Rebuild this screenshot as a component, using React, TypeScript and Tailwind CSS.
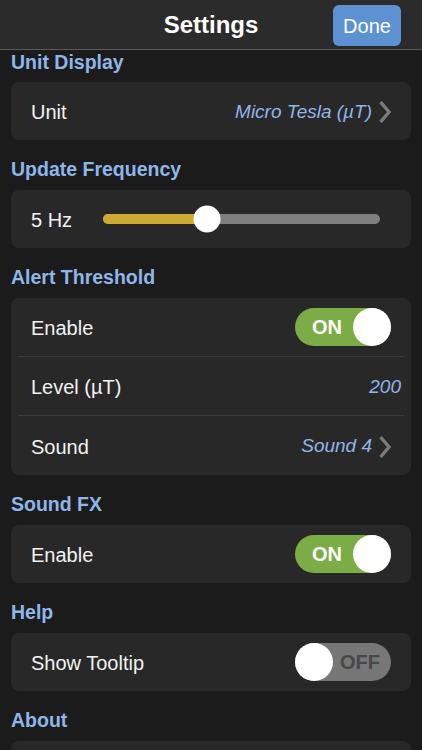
import type { ReactNode } from 'react';

const FONT = { fontFamily: '"Liberation Sans", Arial, sans-serif' };

function SectionHeader({ title, first = false }: { title: string; first?: boolean }) {
  return (
    <div
      className={`flex items-end px-[11px] ${first ? 'h-[32px] pb-[10px]' : 'h-[50px] pb-[11px]'}`}
    >
      <span className="text-[19.5px] leading-[20px] font-bold text-[#8fb6e8]">{title}</span>
    </div>
  );
}

function Card({ children }: { children?: ReactNode }) {
  return <div className="mx-[11px] min-h-[58px] rounded-[8px] bg-[#282828]">{children}</div>;
}

function Divider() {
  return <div className="mx-[7px] h-px bg-[#3d3d3d]" />;
}

function Row({ label, tall = false, children }: { label: string; tall?: boolean; children?: ReactNode }) {
  return (
    <div className={`flex items-center justify-between pl-[20px] ${tall ? 'h-[59px]' : 'h-[58px]'}`}>
      <span className="pt-[2px] text-[20px] text-[#f2f2f2]">{label}</span>
      {children}
    </div>
  );
}

function Chevron() {
  return (
    <svg width="14" height="24" viewBox="0 0 14 24" className="ml-[6px]">
      <path d="M2.5 2 L11 12 L2.5 22" fill="none" stroke="#7a7a7a" strokeWidth="3.4" />
    </svg>
  );
}

function Value({ text, chevron = true }: { text: string; chevron?: boolean }) {
  return (
    <div className={`flex items-center pt-[2px] ${chevron ? 'pr-[19px]' : 'pr-[10px]'}`}>
      <span className="text-[19px] italic text-[#8fb6e8]">{text}</span>
      {chevron && <Chevron />}
    </div>
  );
}

function Toggle({ on }: { on: boolean }) {
  return (
    <div className="mr-[20px]">
      {on ? (
        <div className="flex h-[38px] w-[96px] items-center justify-between rounded-full bg-[#7cac45]">
          <span className="pl-[17px] text-[20px] font-bold text-white">ON</span>
          <div className="h-[38px] w-[38px] rounded-full bg-white" />
        </div>
      ) : (
        <div className="flex h-[38px] w-[96px] items-center justify-between rounded-full bg-[#777777]">
          <div className="h-[38px] w-[38px] rounded-full bg-white" />
          <span className="pr-[11px] text-[20px] font-bold text-[#484848]">OFF</span>
        </div>
      )}
    </div>
  );
}

function Slider({ percent }: { percent: number }) {
  return (
    <div className="relative mr-[31px] ml-[20px] h-[10px] flex-1 rounded-full bg-[#7e7e7e]">
      <div className="h-full rounded-full bg-[#cdab33]" style={{ width: `${percent}%` }} />
      <div
        className="absolute top-1/2 h-[27px] w-[27px] -translate-x-1/2 -translate-y-1/2 rounded-full bg-white"
        style={{ left: `${percent}%` }}
      />
    </div>
  );
}

export default function App() {
  return (
    <div className="h-[750px] w-[422px] overflow-hidden bg-[#1b1b1b]" style={FONT}>
      {/* Navigation bar */}
      <div className="relative flex h-[50px] items-center justify-center border-b border-[#5a5a5a] bg-[#2b2b2b]">
        <span className="text-[24px] font-bold text-white">Settings</span>
        <div className="absolute right-[21px] top-[5px] flex h-[41px] w-[68px] items-center justify-center rounded-[6px] bg-[#5d92d2]">
          <span className="text-[20px] text-white">Done</span>
        </div>
      </div>

      <SectionHeader title="Unit Display" first />
      <Card>
        <Row label="Unit">
          <Value text="Micro Tesla (µT)" />
        </Row>
      </Card>

      <SectionHeader title="Update Frequency" />
      <Card>
        <div className="flex h-[58px] items-center pl-[20px]">
          <span className="w-[52px] pt-[2px] text-[20px] text-[#f2f2f2]">5 Hz</span>
          <Slider percent={37.5} />
        </div>
      </Card>

      <SectionHeader title="Alert Threshold" />
      <Card>
        <Row label="Enable">
          <Toggle on />
        </Row>
        <Divider />
        <Row label="Level (µT)">
          <Value text="200" chevron={false} />
        </Row>
        <Divider />
        <Row label="Sound" tall>
          <Value text="Sound 4" />
        </Row>
      </Card>

      <SectionHeader title="Sound FX" />
      <Card>
        <Row label="Enable">
          <Toggle on />
        </Row>
      </Card>

      <SectionHeader title="Help" />
      <Card>
        <Row label="Show Tooltip">
          <Toggle on={false} />
        </Row>
      </Card>

      <SectionHeader title="About" />
      <Card />
    </div>
  );
}
